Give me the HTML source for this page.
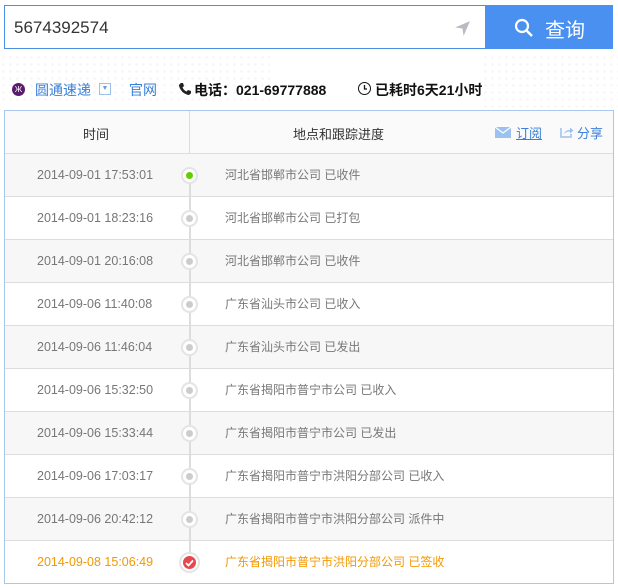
<!DOCTYPE html>
<html><head><meta charset="utf-8"><style>
*{margin:0;padding:0;box-sizing:border-box}
body{width:618px;height:588px;background:#fff;font-family:"Liberation Sans","Noto Sans CJK SC",sans-serif;position:relative;overflow:hidden}
.dots{position:absolute;background-image:radial-gradient(#f4f6f9 1.2px,transparent 1.5px);background-size:7px 7px}
.search{position:absolute;left:4px;top:5px;width:482px;height:44px;border:1px solid #4a90e2;border-right:none;background:#fff}
.search span{position:absolute;left:9px;top:12px;font-size:17px;color:#333}
.btn{position:absolute;left:485px;top:5px;width:128px;height:44px;background:#4a90f0;color:#fff;font-size:20px}
.info{position:absolute;top:80px;left:12px;font-size:14px;white-space:nowrap;height:20px}
.info > *{position:absolute;top:0}
.tbl{position:absolute;left:4px;top:110px;width:610px;height:474px;border:1px solid #a9c8ef;background:#fff}
.hd{height:43px;background:#fafafa;border-bottom:1px solid #ddd;position:relative;font-size:13px;color:#333}
.row{height:43px;border-bottom:1px solid #ddd;position:relative;font-size:12.5px;color:#777}
.row.g{background:#f7f7f7}
.row:last-child{border-bottom:none}
.t,.d{position:absolute;top:0;height:42px;line-height:42px}
.t{left:32px}
.d{left:220px;font-size:12px}
.line{position:absolute;left:184px;top:60px;width:2px;height:400px;background:#ddd;z-index:1}
.dot{position:absolute;left:176px;top:13px;width:17px;height:17px;border-radius:50%;background:#fff;border:2px solid #e4e4e4;z-index:2}
.dot i{position:absolute;left:3px;top:3px;width:7px;height:7px;border-radius:50%;background:#ccc}
.or{color:#f39800}
</style></head><body>
<div class="dots" style="left:0;top:54px;width:270px;height:48px"></div>
<div class="dots" style="left:482px;top:54px;width:136px;height:56px"></div>
<div class="search"><span>5674392574</span>
<svg style="position:absolute;left:449px;top:14px" width="17" height="17" viewBox="0 0 16 16"><path d="M15 1 L1 7 L8 8 L9 15 Z" fill="#b8bcc2"/></svg></div>
<div class="btn"><svg style="position:absolute;left:29px;top:13px" width="20" height="20" viewBox="0 0 20 20"><circle cx="8" cy="8" r="6" fill="none" stroke="#fff" stroke-width="2.2"/><path d="M12.5 12.5 L18 18" stroke="#fff" stroke-width="2.5"/></svg><span style="position:absolute;left:60px;top:9px">查询</span></div>
<div class="info">
<span style="left:0;top:3px;width:13px;height:13px;border-radius:50%;background:#5a1a6e;color:#fff;font-size:8px;text-align:center;line-height:13px">Ж</span>
<span style="left:23px;color:#3a7fd8">圆通速递</span>
<span style="left:87px;top:3px;width:12px;height:12px;border:1px solid #9cc0ea;font-size:7px;color:#6a9fd8;text-align:center;line-height:10px">▼</span>
<span style="left:117px;color:#3a7fd8">官网</span>
<svg style="position:absolute;left:166px;top:2px" width="14" height="14" viewBox="0 0 14 14"><path d="M3 1 L5 1 L6 4 L4.5 5.5 Q6 8.5 8.5 9.5 L10 8 L13 9 L13 11 Q12 13 10 13 Q3 11 1 4 Q1 2 3 1 Z" fill="#222"/></svg>
<span style="left:182px;font-weight:bold;color:#111">电话：021-69777888</span>
<span style="left:346px;top:2px;width:13px;height:13px;border:1.5px solid #111;border-radius:50%"></span>
<svg style="position:absolute;left:346px;top:2px" width="13" height="13" viewBox="0 0 13 13"><path d="M6.5 3 V7 H9" stroke="#111" stroke-width="1.3" fill="none"/></svg>
<span style="left:363px;font-weight:bold;color:#111">已耗时6天21小时</span>
</div>
<div class="tbl">
<div class="hd"><span style="position:absolute;left:78px;top:13px">时间</span>
<div style="position:absolute;left:184px;top:0;width:1px;height:43px;background:#ddd"></div>
<span style="position:absolute;left:288px;top:13px">地点和跟踪进度</span>
<svg style="position:absolute;left:490px;top:16px" width="16" height="11" viewBox="0 0 16 11"><rect width="16" height="11" fill="#9cc0f0"/><path d="M0 0 L8 6 L16 0" stroke="#fff" stroke-width="1.2" fill="none"/></svg>
<span style="position:absolute;left:511px;top:12px;color:#3a7fd8;font-size:13px"><u>订阅</u></span>
<svg style="position:absolute;left:555px;top:14px" width="14" height="13" viewBox="0 0 14 13"><path d="M1 3 V12 H11 V9" stroke="#9cc0f0" stroke-width="1.5" fill="none"/><path d="M4 9 Q5 5 10 5 V2.5 L13.5 5.5 L10 8.5 V6.5 Q6 6.5 4 9 Z" fill="#9cc0f0"/></svg>
<span style="position:absolute;left:572px;top:12px;color:#3a7fd8;font-size:13px">分享</span>
</div>
<div class="line"></div>
<div class="row g"><span class="t">2014-09-01 17:53:01</span><div class="dot"><i style="background:#66cc00"></i></div><span class="d">河北省邯郸市公司 已收件</span></div>
<div class="row"><span class="t">2014-09-01 18:23:16</span><div class="dot"><i></i></div><span class="d">河北省邯郸市公司 已打包</span></div>
<div class="row g"><span class="t">2014-09-01 20:16:08</span><div class="dot"><i></i></div><span class="d">河北省邯郸市公司 已收件</span></div>
<div class="row"><span class="t">2014-09-06 11:40:08</span><div class="dot"><i></i></div><span class="d">广东省汕头市公司 已收入</span></div>
<div class="row g"><span class="t">2014-09-06 11:46:04</span><div class="dot"><i></i></div><span class="d">广东省汕头市公司 已发出</span></div>
<div class="row"><span class="t">2014-09-06 15:32:50</span><div class="dot"><i></i></div><span class="d">广东省揭阳市普宁市公司 已收入</span></div>
<div class="row g"><span class="t">2014-09-06 15:33:44</span><div class="dot"><i></i></div><span class="d">广东省揭阳市普宁市公司 已发出</span></div>
<div class="row"><span class="t">2014-09-06 17:03:17</span><div class="dot"><i></i></div><span class="d">广东省揭阳市普宁市洪阳分部公司 已收入</span></div>
<div class="row g"><span class="t">2014-09-06 20:42:12</span><div class="dot"><i></i></div><span class="d">广东省揭阳市普宁市洪阳分部公司 派件中</span></div>
<div class="row"><span class="t or">2014-09-08 15:06:49</span><div class="dot" style="left:174px;top:11px;width:21px;height:21px"><i style="left:2px;top:2px;width:13px;height:13px;background:#e8474e"></i><svg style="position:absolute;left:4px;top:5px" width="9" height="8" viewBox="0 0 9 8"><path d="M1 4 L3.5 6.5 L8 1.5" stroke="#fff" stroke-width="1.8" fill="none"/></svg></div><span class="d or">广东省揭阳市普宁市洪阳分部公司 已签收</span></div>
</div>
</body></html>
